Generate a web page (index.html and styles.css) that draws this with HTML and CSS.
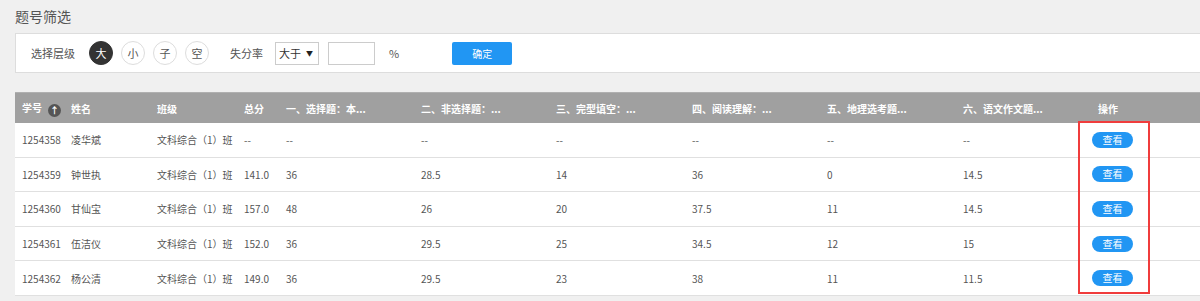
FILE: index.html
```html
<!DOCTYPE html>
<html lang="zh-CN">
<head>
    <meta charset="UTF-8">
    <meta name="viewport" content="width=device-width, initial-scale=1.0">
    <title>题号筛选</title>
    <link rel="stylesheet" href="styles.css">
</head>
<body>
    <h2 class="page-title">题号筛选</h2>

    <!-- filter bar -->
    <div class="filter-bar">
        <span class="filter-label">选择层级</span>
        <div class="level-group">
            <span class="level active">大</span>
            <span class="level">小</span>
            <span class="level">子</span>
            <span class="level">空</span>
        </div>
        <span class="filter-label rate-label">失分率</span>
        <span class="select-wrap">
            <select class="compare-select">
                <option>大于</option>
                <option>小于</option>
            </select>
        </span>
        <input class="rate-input" type="text">
        <span class="percent">%</span>
        <button class="confirm-button">确定</button>
    </div>

    <!-- score table -->
    <div class="table-wrap">
        <table class="score-table">
            <colgroup>
                <col style="width: 49px">
                <col style="width: 86px">
                <col style="width: 87px">
                <col style="width: 42px">
                <col style="width: 135px">
                <col style="width: 135px">
                <col style="width: 136px">
                <col style="width: 135px">
                <col style="width: 136px">
                <col style="width: 135px">
                <col>
            </colgroup>
            <thead>
                <tr>
                    <th class="no-cell">学号<span class="sort-icon">&#8593;</span></th>
                    <th>姓名</th>
                    <th>班级</th>
                    <th>总分</th>
                    <th>一、选择题：本...</th>
                    <th>二、非选择题：...</th>
                    <th>三、完型填空：...</th>
                    <th>四、阅读理解：...</th>
                    <th>五、地理选考题...</th>
                    <th>六、语文作文题...</th>
                    <th>操作</th>
                </tr>
            </thead>
            <tbody>
                <tr>
                    <td>1254358</td><td>凌华斌</td><td>文科综合（1）班</td><td>--</td>
                    <td>--</td><td>--</td><td>--</td><td>--</td><td>--</td><td>--</td>
                    <td class="op-cell"><button class="view-button">查看</button></td>
                </tr>
                <tr>
                    <td>1254359</td><td>钟世执</td><td>文科综合（1）班</td><td>141.0</td>
                    <td>36</td><td>28.5</td><td>14</td><td>36</td><td>0</td><td>14.5</td>
                    <td class="op-cell"><button class="view-button">查看</button></td>
                </tr>
                <tr>
                    <td>1254360</td><td>甘仙宝</td><td>文科综合（1）班</td><td>157.0</td>
                    <td>48</td><td>26</td><td>20</td><td>37.5</td><td>11</td><td>14.5</td>
                    <td class="op-cell"><button class="view-button">查看</button></td>
                </tr>
                <tr>
                    <td>1254361</td><td>伍洁仪</td><td>文科综合（1）班</td><td>152.0</td>
                    <td>36</td><td>29.5</td><td>25</td><td>34.5</td><td>12</td><td>15</td>
                    <td class="op-cell"><button class="view-button">查看</button></td>
                </tr>
                <tr>
                    <td>1254362</td><td>杨公清</td><td>文科综合（1）班</td><td>149.0</td>
                    <td>36</td><td>29.5</td><td>23</td><td>38</td><td>11</td><td>11.5</td>
                    <td class="op-cell"><button class="view-button">查看</button></td>
                </tr>
            </tbody>
        </table>
        <!-- highlight box around the action column -->
        <div class="highlight-box"></div>
    </div>
</body>
</html>
```

FILE: styles.css
```css
/* page basics */
body {
    margin: 0;
    background-color: #f0f0f0;
    font-family: "Noto Sans CJK SC", "Noto Sans", sans-serif;
    color: #555;
}

.page-title {
    margin: 0;
    height: 33px;
    box-sizing: border-box;
    padding: 6px 15px 0;
    font-size: 14px;
    font-weight: normal;
    line-height: 20px;
    color: #555;
}

/* filter bar */
.filter-bar {
    display: flex;
    align-items: center;
    height: 40px;
    box-sizing: border-box;
    margin-left: 15px;
    padding-left: 15px;
    background-color: #fff;
    border: 1px solid #ddd;
    border-right: none;
    font-size: 11px;
}

.filter-label {
    color: #555;
}

.level-group {
    display: flex;
    gap: 8px;
    margin-left: 14px;
}

.level {
    display: flex;
    align-items: center;
    justify-content: center;
    width: 24px;
    height: 24px;
    box-sizing: border-box;
    border: 1px solid #ddd;
    border-radius: 50%;
    background-color: #fff;
    color: #555;
    font-size: 11px;
    cursor: pointer;
}

.level.active {
    background-color: #333;
    border-color: #333;
    color: #fff;
}

.rate-label {
    margin-left: 21px;
}

.select-wrap {
    position: relative;
    margin-left: 12px;
}

.select-wrap::after {
    content: "\25BC";
    position: absolute;
    right: 6px;
    top: 6px;
    font-size: 7px;
    color: #222;
    pointer-events: none;
}

.compare-select {
    appearance: none;
    -webkit-appearance: none;
    width: 44px;
    height: 23px;
    padding: 0 3px;
    border: 1px solid #ccc;
    border-radius: 0;
    background-color: #fff;
    font-family: inherit;
    font-size: 11px;
    color: #333;
}

.rate-input {
    width: 47px;
    height: 23px;
    box-sizing: border-box;
    margin-left: 9px;
    border: 1px solid #ccc;
    padding: 0 4px;
}

.percent {
    margin-left: 14px;
    font-size: 11px;
    color: #555;
}

.confirm-button {
    width: 60px;
    height: 23px;
    margin-left: 53px;
    border: none;
    border-radius: 2px;
    background-color: #2196f3;
    color: #fff;
    font-family: inherit;
    font-size: 10px;
    cursor: pointer;
}

/* table */
.table-wrap {
    position: relative;
    margin: 19px 0 0 15px;
}

.score-table {
    width: 100%;
    table-layout: fixed;
    border-collapse: collapse;
    background-color: #fff;
    font-size: 10px;
}

.score-table th {
    height: 30px;
    padding: 0 0 0 7px;
    background-color: #a0a0a0;
    border-top: 1px solid #b0b0b0;
    color: #fff;
    font-weight: bold;
    text-align: left;
    white-space: nowrap;
    overflow: hidden;
}

.score-table td {
    height: 33.6px;
    padding: 0 0 0 7px;
    border-bottom: 1px solid #e0e0e0;
    color: #555;
    white-space: nowrap;
}

.sort-icon {
    display: inline-flex;
    align-items: center;
    justify-content: center;
    width: 13px;
    height: 13px;
    margin-left: 6px;
    border-radius: 50%;
    background-color: #555;
    color: #fff;
    font-size: 9px;
    vertical-align: -2px;
}

.score-table td.op-cell {
    padding-left: 1px;
}

.view-button {
    width: 41px;
    height: 16px;
    padding: 0;
    border: none;
    border-radius: 8px;
    background-color: #2196f3;
    color: #fff;
    font-family: inherit;
    font-size: 10px;
    line-height: 16px;
    cursor: pointer;
}

.highlight-box {
    position: absolute;
    left: 1063px;
    top: 29px;
    width: 72px;
    height: 173px;
    box-sizing: border-box;
    border: 2px solid #f03c3c;
    pointer-events: none;
}
```
